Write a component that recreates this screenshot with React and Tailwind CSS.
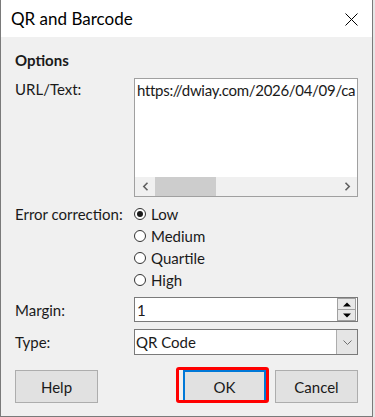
import React from "react";

const font = { fontFamily: 'Lato, "Noto Sans", sans-serif' };

function Radio({ checked, label }) {
  return (
    <div className="h-[22px] flex items-center">
      <span className="w-[12px] h-[12px] rounded-full border border-[#333333] bg-white flex items-center justify-center">
        {checked && <span className="w-[6px] h-[6px] rounded-full bg-[#1a1a1a]" />}
      </span>
      <span className="ml-[5px] text-[15px] text-[#1a1a1a] leading-[20px]">{label}</span>
    </div>
  );
}

export default function App() {
  return (
    <div className="w-[375px] h-[417px] bg-[#e6e6e6] overflow-hidden" style={font}>
      <div className="w-[373px] h-[417px] border-l border-r border-b border-[#7a7a7a] bg-[#f0f0f0] flex flex-col">
        <div className="h-[37px] bg-white flex items-center justify-between pl-[10px] pr-[14px] shrink-0">
          <span className="text-[17px] text-black leading-[20px]">QR and Barcode</span>
          <svg width="13" height="13" viewBox="0 0 13 13" className="mt-[1px]">
            <path d="M0.5 0.5 L12.5 12.5 M12.5 0.5 L0.5 12.5" stroke="#000" strokeWidth="1" fill="none" />
          </svg>
        </div>
        <div className="flex flex-col px-[14px] pt-[13px] text-[15px] text-[#1a1a1a]">
          <div className="font-bold leading-[20px]">Options</div>
          <div className="grid grid-cols-[119px_224px] mt-[8px]">
            <div className="leading-[20px] pt-[1px]">URL/Text:</div>
            <div className="h-[119px] border border-[#a0a0a0] bg-white flex flex-col">
              <div className="h-[98px] overflow-hidden whitespace-nowrap pl-[2px] pt-[1px] leading-[20px] tracking-[-0.3px]">
                https://dwiay.com/2026/04/09/ca
              </div>
              <div className="h-[19px] bg-[#f0f0f0] flex items-stretch">
                <div className="w-[20px] flex items-center justify-center">
                  <svg width="7" height="9" viewBox="0 0 7 9">
                    <path d="M5.5 0.8 L1.8 4.5 L5.5 8.2" stroke="#606060" strokeWidth="1.6" fill="none" />
                  </svg>
                </div>
                <div className="w-[61px] bg-[#cdcdcd]" />
                <div className="flex-1" />
                <div className="w-[20px] flex items-center justify-center">
                  <svg width="7" height="9" viewBox="0 0 7 9">
                    <path d="M1.5 0.8 L5.2 4.5 L1.5 8.2" stroke="#606060" strokeWidth="1.6" fill="none" />
                  </svg>
                </div>
              </div>
            </div>

            <div className="mt-[6px] h-[22px] flex items-center leading-[20px]">Error correction:</div>
            <div className="mt-[6px] flex flex-col">
              <Radio checked label="Low" />
              <Radio label="Medium" />
              <Radio label="Quartile" />
              <Radio label="High" />
            </div>

            <div className="mt-[6px] h-[25px] flex items-center leading-[20px]">Margin:</div>
            <div className="mt-[6px] h-[25px] border border-[#7a7a7a] bg-white flex items-stretch">
              <div className="flex-1 pl-[2px] flex items-center leading-[20px]">1</div>
              <div className="w-[19px] flex flex-col mr-[1px]">
                <div className="flex-1 border border-[#a0a0a0] bg-[#e8e8e8] flex items-center justify-center">
                  <svg width="8" height="5" viewBox="0 0 8 5"><path d="M0 4.5 L4 0.5 L8 4.5 Z" fill="#000" /></svg>
                </div>
                <div className="flex-1 border border-[#a0a0a0] border-t-0 bg-[#e8e8e8] flex items-center justify-center">
                  <svg width="8" height="5" viewBox="0 0 8 5"><path d="M0 0.5 L4 4.5 L8 0.5 Z" fill="#000" /></svg>
                </div>
              </div>
            </div>

            <div className="mt-[7px] h-[26px] flex items-center leading-[20px]">Type:</div>
            <div className="mt-[7px] h-[26px] border border-[#7a7a7a] bg-white flex items-stretch">
              <div className="flex-1 pl-[1px] flex items-center leading-[20px]">QR Code</div>
              <div className="w-[21px] border-l border-[#adadad] bg-[#e5e5e5] flex items-center justify-center">
                <svg width="9" height="5" viewBox="0 0 9 5"><path d="M0.5 0.5 L4.5 4.5 L8.5 0.5" stroke="#707070" strokeWidth="1" fill="none" /></svg>
              </div>
            </div>
          </div>

          <div className="mt-[15px] flex items-center">
            <button className="w-[83px] h-[33px] bg-[#e1e1e1] border border-[#adadad] leading-[20px] text-[15px]">Help</button>
            <div className="flex-1" />
            <div className="relative">
              <button className="w-[83px] h-[33px] bg-[#e1e1e1] border-2 border-[#0078d7] leading-[20px] text-[15px]">OK</button>
              <div className="absolute left-[-7px] top-[-3px] w-[93px] h-[36px] border-[3px] border-[#ff0000] rounded-[3px] pointer-events-none" />
            </div>
            <button className="ml-[9px] w-[83px] h-[33px] bg-[#e1e1e1] border border-[#adadad] leading-[20px] text-[15px]">Cancel</button>
          </div>
        </div>
      </div>
    </div>
  );
}
